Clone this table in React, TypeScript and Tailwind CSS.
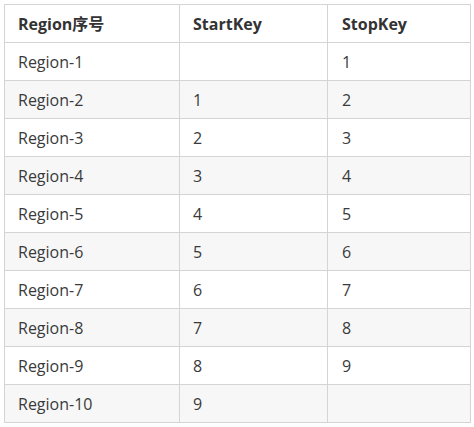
import React from 'react';

const rows: [string, string, string][] = [
  ['Region-1', '', '1'],
  ['Region-2', '1', '2'],
  ['Region-3', '2', '3'],
  ['Region-4', '3', '4'],
  ['Region-5', '4', '5'],
  ['Region-6', '5', '6'],
  ['Region-7', '6', '7'],
  ['Region-8', '7', '8'],
  ['Region-9', '8', '9'],
  ['Region-10', '9', ''],
];

export default function App() {
  return (
    <div className="min-h-[427px] bg-white pt-[4px] pl-[4px] font-['Open_Sans','Noto_Sans_CJK_SC',sans-serif] text-[16px] text-[#3a3a3a]">
      <table className="w-[466px] table-fixed border-collapse">
        <colgroup>
          <col className="w-[175px]" />
          <col className="w-[148px]" />
          <col className="w-[143px]" />
        </colgroup>
        <thead>
          <tr className="h-[38px]">
            <th className="border border-[#d4d4d4] pl-[13px] text-left font-bold text-[#333]">Region序号</th>
            <th className="border border-[#d4d4d4] pl-[13px] text-left font-bold text-[#333]">StartKey</th>
            <th className="border border-[#d4d4d4] pl-[14px] text-left font-bold text-[#333]">StopKey</th>
          </tr>
        </thead>
        <tbody>
          {rows.map((r, i) => (
            <tr key={r[0]} className={i % 2 === 1 ? 'h-[38px] bg-[#f7f7f7]' : 'h-[38px] bg-white'}>
              <td className="border border-[#d4d4d4] pl-[13px]">{r[0]}</td>
              <td className="border border-[#d4d4d4] pl-[13px]">{r[1]}</td>
              <td className="border border-[#d4d4d4] pl-[14px]">{r[2]}</td>
            </tr>
          ))}
        </tbody>
      </table>
    </div>
  );
}
